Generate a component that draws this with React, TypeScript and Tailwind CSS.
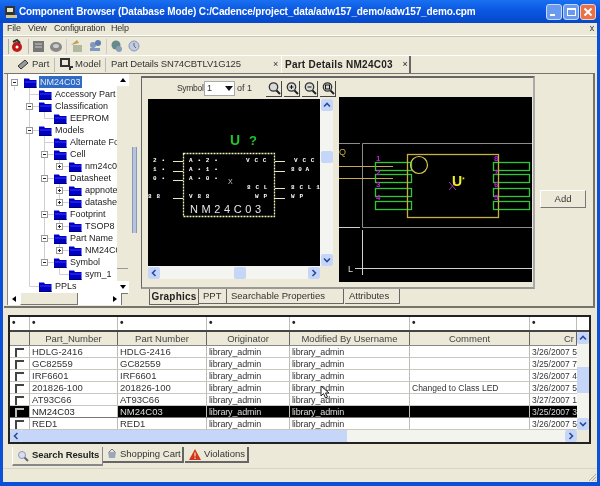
import React from "react";

const F = "[font-family:'Liberation_Sans',Arial,sans-serif]";

function Folder() {
  return (
    <svg width="13" height="11" viewBox="0 0 13 11" className="shrink-0">
      <path d="M0 1.5H5L6 3H12.5V11H0Z" fill="#0000c8" />
      <path d="M1 4.5H12V5.5H1Z" fill="#3a3ae8" />
      <path d="M0 10H12.5V11H0Z" fill="#00006a" />
    </svg>
  );
}

function Expander({ open }: { open: boolean }) {
  return (
    <svg width="7" height="7" viewBox="0 0 7 7" className="shrink-0">
      <rect x="0.5" y="0.5" width="6" height="6" fill="#fff" stroke="#9a9a9a" />
      <path d={open ? "M2 3.5H5" : "M2 3.5H5M3.5 2V5"} stroke="#222" />
    </svg>
  );
}

const tree: [string, number, "open" | "closed" | "none", boolean?][] = [
  ["NM24C03", 0, "open", true],
  ["Accessory Part", 1, "none"],
  ["Classification", 1, "open"],
  ["EEPROM", 2, "none"],
  ["Models", 1, "open"],
  ["Alternate Foc", 2, "none"],
  ["Cell", 2, "open"],
  ["nm24c03", 3, "closed"],
  ["Datasheet", 2, "open"],
  ["appnote_", 3, "closed"],
  ["datasheet", 3, "closed"],
  ["Footprint", 2, "open"],
  ["TSOP8", 3, "closed"],
  ["Part Name", 2, "open"],
  ["NM24C0", 3, "closed"],
  ["Symbol", 2, "open"],
  ["sym_1", 3, "none"],
  ["PPLs", 1, "none"],
];

const depthPad = ["pl-[3px]", "pl-[18px]", "pl-[33px]", "pl-[48px]"];

const ry = (k: number) => 8.5 + 12 * k;
const guides =
  `M21.5 ${ry(0)}V${ry(17)}M6.5 ${ry(0) + 4}V${ry(0) + 8}` +
  [1, 2, 4, 17].map((k) => `M21.5 ${ry(k)}H31`).join("") +
  `M36.5 ${ry(2)}V${ry(3)}M36.5 ${ry(4)}V${ry(15)}` +
  [3, 5, 6, 8, 11, 13, 15].map((k) => `M36.5 ${ry(k)}H46`).join("") +
  [[6, 7], [8, 10], [11, 12], [13, 14], [15, 16]].map(([a, b]) => `M51.5 ${ry(a)}V${ry(b)}`).join("") +
  [7, 9, 10, 12, 14, 16].map((k) => `M51.5 ${ry(k)}H61`).join("");

function TreeRow({ label, depth, state, selected }: { label: string; depth: number; state: string; selected?: boolean }) {
  return (
    <div className={`h-[12px] flex items-center whitespace-nowrap ${depthPad[depth]}`}>
      <span className="w-[7px] h-[7px] flex shrink-0">
        {state !== "none" && <Expander open={state === "open"} />}
      </span>
      <span className="ml-[6px] flex"><Folder /></span>
      <span className={`ml-[2px] px-[1px] text-[9px] leading-[12px] ${selected ? "bg-[#316ac5] text-[#dfe8f8]" : "text-[#222]"}`}>{label}</span>
    </div>
  );
}

function ArrowBtn({ dir, xp, plain }: { dir: "up" | "down" | "left" | "right"; xp?: boolean; plain?: boolean }) {
  const path = {
    up: xp ? "M2 6.5L5 3.5L8 6.5" : "M2 7H8L5 3Z",
    down: xp ? "M2 3.5L5 6.5L8 3.5" : "M2 3H8L5 7Z",
    left: xp ? "M6.5 2L3.5 5L6.5 8" : "M7 2V8L3 5Z",
    right: xp ? "M3.5 2L6.5 5L3.5 8" : "M3 2V8L7 5Z",
  }[dir];
  return (
    <div className={`w-[12px] h-[12px] shrink-0 flex items-center justify-center ${xp ? "bg-[#c5d6f8] rounded-[2px]" : plain ? "bg-white" : "bg-[#ece9d8] border-r border-b border-[#777]"}`}>
      <svg width="10" height="10" viewBox="0 0 10 10">
        {xp ? <path d={path} fill="none" stroke="#2a4a9a" strokeWidth="1.6" /> : <path d={path} fill="#000" />}
      </svg>
    </div>
  );
}

function Zoom({ k }: { k: string }) {
  return (
    <div className="w-[16px] h-[16px] border-r border-b border-[#444] flex items-center justify-center">
      <svg width="14" height="14" viewBox="0 0 14 14">
        <circle cx="6.5" cy="6" r="4.2" fill="#d8dcd8" stroke="#333" strokeWidth="1.3" />
        <path d="M9.5 9.5L13 13" stroke="#222" strokeWidth="2" />
        {k === "in" && <path d="M4.5 6H8.5M6.5 4V8" stroke="#111" />}
        {k === "out" && <path d="M4.5 6H8.5" stroke="#111" />}
        {k === "fit" && <rect x="4.5" y="4" width="4" height="4" fill="none" stroke="#111" />}
      </svg>
    </div>
  );
}

function SymbolDrawing() {
  const t = { fontFamily: "'Liberation Mono', monospace", fontSize: 6, fontWeight: 700, fill: "#fff", letterSpacing: 0.6 } as const;
  return (
    <svg width="172" height="167" viewBox="0 0 172 167" className="block bg-black">
      <text x="82" y="46" fontFamily="'Liberation Sans', sans-serif" fontSize="14" fontWeight="700" fill="#1fc52a">U</text>
      <text x="101" y="46" fontFamily="'Liberation Sans', sans-serif" fontSize="13" fontWeight="700" fill="#1fc52a">?</text>
      <rect x="35.5" y="54.5" width="91" height="63" fill="none" stroke="#f4f4b8" strokeWidth="1.3" strokeDasharray="2 1" />
      <path d="M25 62.5H35M25 72.5H35M25 81.5H35M25 99.5H35M127 62.5H137M127 72.5H137M127 89.5H137M127 99.5H137" stroke="#e8e8c0" strokeWidth="1.2" />
      <text x="5" y="63" {...t}>2 •</text>
      <text x="5" y="72" {...t}>1 •</text>
      <text x="5" y="81" {...t}>0 •</text>
      <text x="0" y="99" {...t}>8 8</text>
      <text x="41" y="63" {...t}>A • 2 •</text>
      <text x="41" y="72" {...t}>A • 1 •</text>
      <text x="41" y="81" {...t}>A • 0 •</text>
      <text x="41" y="99" {...t}>V 8 8</text>
      <text x="98" y="63" {...t}>V C C</text>
      <text x="99" y="90" {...t}>8 C L</text>
      <text x="107" y="99" {...t}>W P</text>
      <text x="146" y="63" {...t}>V C C</text>
      <text x="143" y="72" {...t} letterSpacing="0">8 0 A</text>
      <text x="143" y="90" {...t}>8 C L 1</text>
      <text x="143" y="99" {...t}>W P</text>
      <text x="80" y="85" fontFamily="'Liberation Sans', sans-serif" fontSize="7" fill="#ccc">X</text>
      <text x="42" y="114" fontFamily="'Liberation Sans', sans-serif" fontSize="11" fill="#e4e4e4" letterSpacing="3.6">NM24C03</text>
    </svg>
  );
}

function FootprintDrawing() {
  const pads = [162, 174, 188, 201];
  const s = { fontFamily: "'Liberation Sans', sans-serif" };
  return (
    <svg width="193" height="185" viewBox="339 97 193 185" className="block bg-black">
      <path d="M339 143.5H360M362.5 143.5H532M362.5 143.5V227.5H532" fill="none" stroke="#8c8c8c" />
      <path d="M339 227.5H360M362.5 230V275M355 268.5H532" fill="none" stroke="#d0d0d0" />
      <path d="M339 166.5H393M339 178.5H393" stroke="#c8a848" strokeWidth="1.2" />
      <text x="339" y="155" {...s} fontSize="9" fill="#c8a848">Q</text>
      <text x="348" y="272" {...s} fontSize="9" fill="#ddd">L</text>
      {pads.map((p) => (
        <React.Fragment key={p}>
          <rect x="375.5" y={p + 0.5} width="36" height="8" fill="none" stroke="#2cc836" strokeWidth="1.3" />
          <rect x="493.5" y={p + 0.5} width="36" height="8" fill="none" stroke="#2cc836" strokeWidth="1.3" />
        </React.Fragment>
      ))}
      <rect x="407.5" y="154.5" width="91" height="63" fill="none" stroke="#c8b040" strokeWidth="1.3" />
      <circle cx="419" cy="165" r="8.5" fill="none" stroke="#d8c850" strokeWidth="1.2" />
      <path d="M449 182L456 190M456 182L449 190" stroke="#a030c0" />
      <text x="452" y="186" {...s} fontSize="14" fontWeight="700" fill="#f0f020">U</text>
      <text x="462" y="182" {...s} fontSize="7" fill="#f0f020">*</text>
      {[["1", 161], ["2", 175], ["3", 187], ["4", 200]].map(([n, y]) => (
        <text key={String(n)} x="376" y={Number(y)} {...s} fontSize="8" fontWeight="700" fill="#c020d8">{n}</text>
      ))}
      {[["8", 161], ["7", 175], ["6", 187], ["5", 200]].map(([n, y]) => (
        <text key={String(n)} x="494" y={Number(y)} {...s} fontSize="8" fontWeight="700" fill="#c020d8">{n}</text>
      ))}
    </svg>
  );
}

const cols = ["w-[20px]", "w-[88px]", "w-[89px]", "w-[83px]", "w-[120px]", "w-[120px]", "w-[47px]"];
const heads = ["", "Part_Number", "Part Number", "Originator", "Modified By Username", "Comment", "Cr"];
const rows = [
  ["HDLG-2416", "HDLG-2416", "3/26/2007 5:", ""],
  ["GC82559", "GC82559", "3/25/2007 7:", ""],
  ["IRF6601", "IRF6601", "3/26/2007 4:", ""],
  ["201826-100", "201826-100", "3/26/2007 5:", "Changed to Class LED"],
  ["AT93C66", "AT93C66", "3/27/2007 1:", ""],
  ["NM24C03", "NM24C03", "3/25/2007 3:", ""],
  ["RED1", "RED1", "3/26/2007 5:", ""],
];

function Cell({ w, children, cls = "" }: { w: string; children?: React.ReactNode; cls?: string }) {
  return <div className={`${w} shrink-0 h-full overflow-hidden whitespace-nowrap px-[2px] border-r border-[#bdbdb5] leading-[12px] ${cls}`}>{children}</div>;
}

function Check() {
  return <div className="w-[9px] h-[9px] mx-auto mt-[2px] border-l-2 border-t-2 border-[#444]" />;
}

function Row({ r, sel }: { r: string[]; sel: boolean }) {
  const c = sel ? "text-[#ddd]" : "text-[#333]";
  return (
    <div className={`h-[12px] flex border-b ${sel ? "bg-black border-[#777]" : "bg-white border-[#c8c8c0]"}`}>
      <Cell w={cols[0]} cls={sel ? "bg-black" : ""}><div className={sel ? "invert" : ""}><Check /></div></Cell>
      <Cell w={cols[1]} cls={`text-[9.5px] ${sel ? "bg-white text-[#222]" : c}`}>{r[0]}</Cell>
      <Cell w={cols[2]} cls={`text-[9.5px] ${c}`}>{r[1]}</Cell>
      <Cell w={cols[3]} cls={`text-[9px] tracking-[-0.15px] ${c}`}>library_admin</Cell>
      <Cell w={cols[4]} cls={`text-[9px] tracking-[-0.15px] ${c}`}>library_admin</Cell>
      <Cell w={cols[5]} cls={`text-[8.5px] ${c}`}>{r[3]}</Cell>
      <Cell w={cols[6]} cls={`text-[8.5px] !pr-0 !border-r-0 ${c}`}>{r[2]}</Cell>
    </div>
  );
}

function Tb({ c }: { c: React.ReactNode }) {
  return <svg width="14" height="14" viewBox="0 0 14 14" className="shrink-0">{c}</svg>;
}

export default function App() {
  return (
    <div className={`w-[600px] h-[486px] overflow-hidden bg-[#0a50d8] flex flex-col blur-[0.4px] ${F}`}>
      {/* title bar */}
      <div className="h-[23px] shrink-0 flex items-center pl-[4px] pr-[4px] bg-gradient-to-b from-[#1a70f0] via-[#0a55e0] to-[#0648c8]">
        <svg width="14" height="14" viewBox="0 0 14 14" className="shrink-0">
          <rect x="1" y="1" width="10" height="9" fill="#333" />
          <rect x="3" y="3" width="6" height="4" fill="#e8e4c8" />
          <rect x="2" y="10" width="11" height="3" fill="#d0c890" />
        </svg>
        <span className="ml-[1px] text-white font-bold text-[10px] tracking-[-0.12px] whitespace-nowrap">Component Browser (Database Mode) C:/Cadence/project_data/adw157_demo/adw157_demo.cpm</span>
        <div className="ml-auto flex gap-[1px]">
          <div className="w-[16px] h-[16px] rounded-[3px] bg-[#6a9af0] border border-[#c8d8f8] flex items-end pl-[3px] pb-[3px]"><div className="w-[5px] h-[2px] bg-white" /></div>
          <div className="w-[16px] h-[16px] rounded-[3px] bg-[#6a9af0] border border-[#c8d8f8] flex items-center justify-center"><div className="w-[9px] h-[8px] border border-t-2 border-white" /></div>
          <div className="w-[16px] h-[16px] rounded-[3px] bg-[#e8704a] border border-[#f0d0c0] flex items-center justify-center">
            <svg width="10" height="10" viewBox="0 0 10 10"><path d="M1.5 1.5L8.5 8.5M8.5 1.5L1.5 8.5" stroke="#fff" strokeWidth="2" /></svg>
          </div>
        </div>
      </div>

      {/* client area */}
      <div className="flex-1 mx-[3px] mb-[4px] bg-[#ece9d8] flex flex-col min-h-0">
        {/* menu */}
        <div className="h-[13px] shrink-0 flex items-center text-[9px] tracking-[-0.2px] text-[#333] border-b border-[#fff] pl-[4px] pr-[2px]">
          <span className="w-[21px]">File</span><span className="w-[26px]">View</span><span className="w-[57px]">Configuration</span><span>Help</span>
          <span className="ml-auto pr-[1px] text-[9px]">x</span>
        </div>
        {/* toolbar */}
        <div className="h-[19px] shrink-0 flex items-center pl-[5px] border-t border-[#c8c5b2]">
          <div className="w-[2px] h-[15px] border-l border-[#aaa]" />
          <Tb c={<><circle cx="7" cy="8" r="5" fill="#c01818" /><path d="M3 3L7 1L10 4" fill="none" stroke="#333" strokeWidth="2" /><circle cx="7" cy="8" r="1.5" fill="#fff" /></>} />
          <div className="w-[1px] h-[15px] bg-[#bbb] ml-[4px] mr-[3px]" />
          <Tb c={<><rect x="1" y="2" width="11" height="11" fill="#777" /><path d="M3 5H10M3 8H10" stroke="#ccc" /></>} />
          <div className="w-[3px]" />
          <Tb c={<><ellipse cx="7" cy="8" rx="6" ry="5" fill="#888" /><ellipse cx="7" cy="7" rx="3" ry="2" fill="#ccc" /></>} />
          <div className="w-[1px] h-[15px] bg-[#ccc] ml-[3px] mr-[3px]" />
          <Tb c={<><rect x="3" y="6" width="9" height="7" fill="#b0b8a0" /><path d="M1 6L7 1L9 4" fill="#c0a050" /></>} />
          <div className="w-[4px]" />
          <Tb c={<><circle cx="5" cy="6" r="3" fill="#8098c0" /><circle cx="10" cy="4" r="3" fill="#6080b0" /><rect x="2" y="9" width="10" height="3" fill="#8098c0" /></>} />
          <div className="w-[1px] h-[15px] bg-[#ccc] ml-[4px] mr-[3px]" />
          <Tb c={<><circle cx="6" cy="6" r="4.5" fill="#688a8a" /><circle cx="9" cy="10" r="3" fill="#8aa0b8" /></>} />
          <div className="w-[3px]" />
          <Tb c={<><circle cx="7" cy="7" r="5" fill="#c0cce0" stroke="#8898b8" /><path d="M7 4V7L9 9" stroke="#667" fill="none" /></>} />
        </div>
        {/* document tabs */}
        <div className="h-[18px] shrink-0 flex items-center text-[9.5px] text-[#333] border-t border-[#fff] pl-[14px]">
          <svg width="12" height="11" viewBox="0 0 12 11" className="shrink-0"><path d="M1 7L8 1L11 4L4 10Z" fill="#999" stroke="#333" /></svg>
          <span className="ml-[3px] w-[22px]">Part</span>
          <div className="w-[1px] h-[14px] bg-[#bbb]" />
          <svg width="14" height="13" viewBox="0 0 14 13" className="ml-[5px] shrink-0"><rect x="1" y="1" width="8" height="7" fill="none" stroke="#333" strokeWidth="2" /><path d="M10 9H13M10 9V12" stroke="#333" strokeWidth="2" /></svg>
          <span className="ml-[1px] w-[30px]">Model</span>
          <div className="w-[1px] h-[14px] bg-[#bbb]" />
          <div className="w-[175px] pl-[5px] flex items-center whitespace-nowrap tracking-[-0.15px]">
            Part Details SN74CBTLV1G125
            <span className="ml-auto pr-[3px] text-[9px]">×</span>
          </div>
          <div className="w-[130px] h-[18px] border-l border-r-2 border-[#fff] border-r-[#666] pl-[3px] flex items-center whitespace-nowrap font-bold text-[10px] text-[#222] tracking-[0.25px]">
            Part Details NM24C03
            <span className="ml-auto pr-[1px] font-normal text-[9px]">×</span>
          </div>
        </div>

        {/* main top panel */}
        <div className="h-[235px] shrink-0 border-t border-r-2 border-b-2 border-[#77756a] ml-[1px] mr-[2px] flex pl-[3px]">
          {/* tree */}
          <div className="w-[121px] shrink-0 flex flex-col pb-[2px]">
            <div className="h-[219px] shrink-0 flex bg-white border-l border-[#888]">
              <div className="flex-1 min-w-0 pt-[2px] overflow-hidden relative">
                <svg width="110" height="219" viewBox="0 0 110 219" className="absolute left-0 top-0">
                  <path d={guides} fill="none" stroke="#d0d0d0" />
                </svg>
                <div className="relative">
                  {tree.map(([l, d, s, sel]) => <TreeRow key={l} label={l} depth={d} state={s} selected={sel} />)}
                </div>
              </div>
              <div className="w-[11px] shrink-0 bg-[#ece9d8] flex flex-col">
                <ArrowBtn dir="up" plain />
                <div className="flex-1 border-b border-[#999]" />
                <div className="h-[12px]" />
                <ArrowBtn dir="down" plain />
              </div>
            </div>
            <div className="h-[12px] shrink-0 flex items-center bg-[#ece9d8] border-l border-[#888]">
              <ArrowBtn dir="left" plain />
              <div className="w-[58px] h-full border-r border-b border-[#777] border-l border-l-white" />
              <div className="w-[31px] h-full bg-white" />
              <ArrowBtn dir="right" plain />
              <div className="flex-1 h-full border-l border-t border-[#777]" />
            </div>
          </div>

          {/* splitter */}
          <div className="w-[13px] shrink-0 flex items-start justify-center pt-[73px]">
            <div className="w-[5px] h-[86px] bg-[#b8c4dc] border-x border-[#8898b8]" />
          </div>

          {/* center */}
          <div className="w-[394px] shrink-0 flex flex-col mt-[2px]">
            <div className="h-[213px] shrink-0 border border-r-2 border-t-2 border-b-2 border-[#666] border-r-[#aaa] border-b-[#999] flex flex-col pl-[6px]">
              <div className="h-[21px] shrink-0 flex items-center pl-[29px] text-[9px] text-[#333]">
                <span className="w-[26px] text-[8.5px] tracking-[-0.3px] whitespace-nowrap">Symbol</span>
                <div className="ml-[1px] w-[31px] h-[15px] bg-white border border-[#aaa] flex items-center pl-[2px]">
                  1
                  <svg width="8" height="6" viewBox="0 0 8 6" className="ml-auto mr-[1px]"><path d="M0 0H8L4 5Z" fill="#111" /></svg>
                </div>
                <span className="ml-[2px] w-[13px] whitespace-nowrap">of 1</span>
                <div className="ml-[16px] flex gap-[2px]">
                  <Zoom k="o" /><Zoom k="in" /><Zoom k="out" /><Zoom k="fit" />
                </div>
              </div>
              <div className="flex-1 flex min-h-0">
                <div className="w-[185px] shrink-0 flex flex-col">
                  <div className="flex">
                    <SymbolDrawing />
                    <div className="w-[13px] h-[167px] bg-[#f4f4f0] flex flex-col items-center">
                      <ArrowBtn dir="up" xp />
                      <div className="w-[12px] h-[12px] mt-[40px] bg-[#c5d6f8] rounded-[2px]" />
                      <div className="mt-auto"><ArrowBtn dir="down" xp /></div>
                    </div>
                  </div>
                  <div className="h-[13px] w-[172px] bg-[#f4f4f0] flex items-center">
                    <ArrowBtn dir="left" xp />
                    <div className="w-[12px] h-[12px] ml-[74px] bg-[#c5d6f8] rounded-[2px]" />
                    <div className="ml-auto"><ArrowBtn dir="right" xp /></div>
                  </div>
                </div>
                <div className="ml-[6px] -mt-[2px]"><FootprintDrawing /></div>
              </div>
            </div>
            {/* sub tabs */}
            <div className="h-[16px] shrink-0 flex text-[9.5px] text-[#333] pl-[8px]">
              <div className="w-[50px] h-[16px] border-l border-r border-b border-[#666] flex items-center justify-center font-bold text-[10px] text-[#222] tracking-[0.2px]">Graphics</div>
              <div className="w-[28px] h-[15px] border-r border-b border-[#666] flex items-center pl-[4px]">PPT</div>
              <div className="w-[117px] h-[15px] border-r border-b border-[#666] flex items-center pl-[4px] whitespace-nowrap">Searchable Properties</div>
              <div className="w-[55px] h-[15px] border-r border-b border-[#666] flex items-center pl-[4px] ml-[1px]">Attributes</div>
            </div>
          </div>

          {/* add column */}
          <div className="flex-1 flex items-center justify-center pt-[18px] pr-[2px]">
            <div className="w-[46px] h-[18px] bg-[#ece9d8] border-t border-l border-[#fff] border-r border-b border-r-[#777] border-b-[#777] flex items-center justify-center text-[9.5px] text-[#333]">Add</div>
          </div>
        </div>

        {/* bottom panel */}
        <div className="relative h-[129px] shrink-0 mt-[7px] ml-[5px] mr-[6px] border-2 border-[#222] flex flex-col bg-white">
          <div className="h-[15px] shrink-0 flex border-b-2 border-[#444] bg-white text-[#222] font-bold">
            {cols.map((w, i) => <Cell key={w + i} w={w} cls="text-[10px]">•</Cell>)}
          </div>
          <div className="flex-1 flex min-h-0">
            <div className="flex-1 min-w-0 overflow-hidden flex flex-col">
              <div className="h-[14px] shrink-0 flex border-b border-[#888] bg-[#ece9d8] text-[#444]">
                {heads.map((h, i) => (
                  <Cell key={i} w={cols[i]} cls={`text-[9.5px] !leading-[13px] !border-[#666] ${i === 6 ? "text-right" : "text-center"}`}>{h}</Cell>
                ))}
              </div>
              {rows.map((r, i) => <Row key={r[0]} r={r} sel={i === 5} />)}
              <div className="h-[12px] shrink-0 flex bg-[#f4f4ee]">
                <ArrowBtn dir="left" xp />
                <div className="w-[325px] h-[12px] bg-[#c5d6f8]" />
                <div className="ml-auto"><ArrowBtn dir="right" xp /></div>
              </div>
            </div>
            <div className="w-[12px] shrink-0 bg-[#f4f4ee] flex flex-col">
              <ArrowBtn dir="up" xp />
              <div className="h-[26px] mt-[23px] bg-[#c5d6f8]" />
              <div className="mt-auto"><ArrowBtn dir="down" xp /></div>
              <div className="h-[12px] bg-[#ece9d8]" />
            </div>
          </div>
          <svg width="11" height="14" viewBox="0 0 11 14" className="absolute left-[310px] top-[68px]">
            <path d="M1 1V11L3.5 8.5L5.5 13L7.5 12L5.5 8H9Z" fill="#fff" stroke="#222" />
          </svg>
        </div>

        {/* result tabs */}
        <div className="h-[19px] mt-[3px] shrink-0 flex ml-[9px] text-[9.5px] text-[#333] whitespace-nowrap">
          <div className="w-[91px] h-[19px] border-l border-b-2 border-r border-[#fff] border-b-[#888] border-r-[#888] flex items-center pl-[4px] gap-[3px] font-bold text-[#222] tracking-[-0.1px]">
            <svg width="12" height="12" viewBox="0 0 12 12" className="shrink-0"><circle cx="5" cy="5" r="3.5" fill="#dde" stroke="#8898c0" /><path d="M7.5 7.5L11 11" stroke="#667" strokeWidth="2" /></svg>
            Search Results
          </div>
          <div className="w-[81px] h-[16px] border-r-2 border-b-2 border-[#666] flex items-center pl-[3px] gap-[2px]">
            <svg width="12" height="12" viewBox="0 0 12 12" className="shrink-0"><path d="M2 4H10L9 10H3Z" fill="#9aa8b8" /><path d="M3 4L6 1L9 4" fill="none" stroke="#778" /></svg>
            Shopping Cart
          </div>
          <div className="w-[64px] h-[16px] border-r-2 border-b-2 border-[#666] ml-[1px] flex items-center pl-[4px] gap-[3px]">
            <svg width="12" height="11" viewBox="0 0 12 11" className="shrink-0"><path d="M6 0L12 11H0Z" fill="#d03818" /><path d="M6 3.5V7.5M6 8.5V10" stroke="#fff" /></svg>
            Violations
          </div>
        </div>

        {/* status */}
        <div className="flex-1 flex items-end justify-end border-t border-[#d8d5c4] mt-[2px]">
          <svg width="10" height="10" viewBox="0 0 10 10"><path d="M9 2L2 9M9 5L5 9M9 8L8 9" stroke="#aaa" /></svg>
        </div>
      </div>
    </div>
  );
}
